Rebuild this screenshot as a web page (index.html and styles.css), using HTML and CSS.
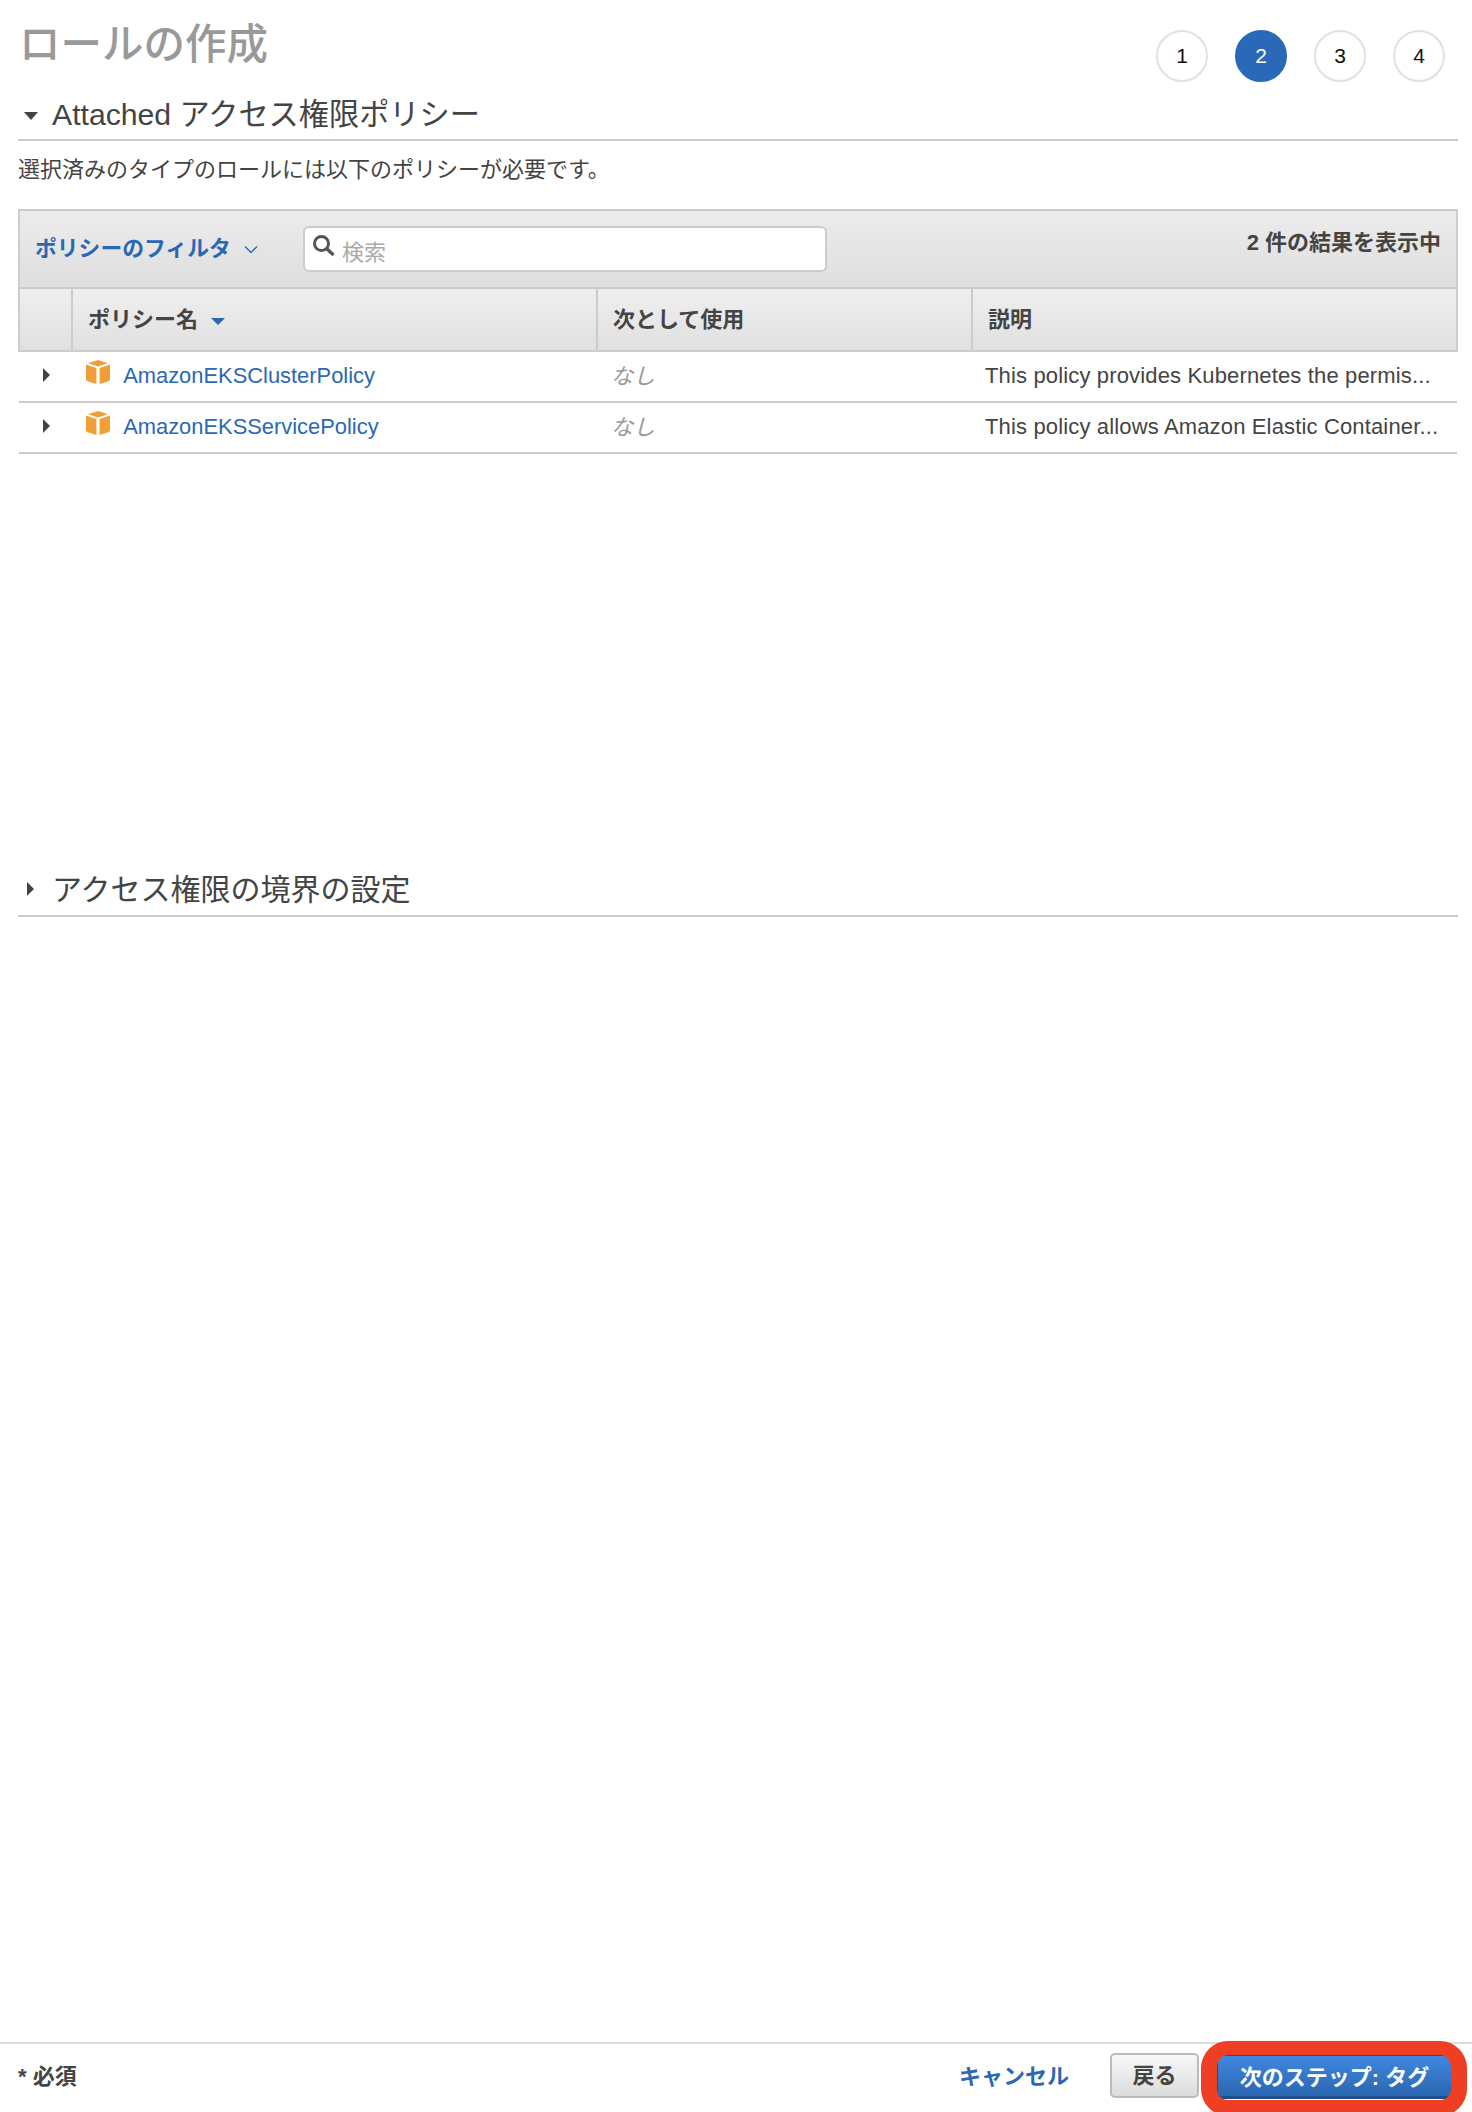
FILE: index.html
```html
<!DOCTYPE html>
<html lang="ja">
<head>
    <meta charset="UTF-8">
    <meta name="viewport" content="width=device-width, initial-scale=1.0">
    <title>ロールの作成</title>
    <link rel="stylesheet" href="styles.css">
</head>
<body>
    <div class="page">
        <div class="top">
            <h1>ロールの作成</h1>
            <div class="steps">
                <span class="step">1</span>
                <span class="step active">2</span>
                <span class="step">3</span>
                <span class="step">4</span>
            </div>
        </div>
        <h2 class="section-title"><span class="tri-down"></span>Attached アクセス権限ポリシー</h2>
        <p class="intro">選択済みのタイプのロールには以下のポリシーが必要です。</p>

        <div class="filter-bar">
            <a class="filter-link" href="#">ポリシーのフィルタ
                <svg class="chevron" width="14" height="9" viewBox="0 0 14 9"><path d="M1 1.5l6 6 6-6" fill="none" stroke="#2a68b4" stroke-width="1.4"/></svg>
            </a>
            <div class="search">
                <svg class="search-icon" width="22" height="21" viewBox="0 0 22 21"><circle cx="8.5" cy="8.5" r="7" fill="none" stroke="#555" stroke-width="3"/><path d="M13.5 13.5l7 6.5" stroke="#555" stroke-width="3.4"/></svg>
                <span class="placeholder">検索</span>
            </div>
            <div class="count">2 件の結果を表示中</div>
        </div>
        <table class="policies">
            <colgroup>
                <col class="col-toggle">
                <col class="col-name">
                <col class="col-used">
                <col>
            </colgroup>
            <thead>
                <tr>
                    <th></th>
                    <th>ポリシー名<span class="sort"></span></th>
                    <th>次として使用</th>
                    <th>説明</th>
                </tr>
            </thead>
            <tbody>
                <tr>
                    <td><span class="tri-right tri-row"></span></td>
                    <td>
                        <svg class="cube" width="24" height="24" viewBox="0 0 24 24"><path d="M12 0l10 3.2L12 6.6 2 3.2z" fill="#f19e38"/><path d="M0 4.4l10.4 3.6V24L1.6 21.2 0 20z" fill="#f19e38"/><path d="M24 4.4L13.6 8V24l8.8-2.8 1.6-1.2z" fill="#f19e38"/></svg>
                        <a class="policy-link" href="#">AmazonEKSClusterPolicy</a>
                    </td>
                    <td class="none">なし</td>
                    <td class="desc">This policy provides Kubernetes the permis...</td>
                </tr>
                <tr>
                    <td><span class="tri-right tri-row"></span></td>
                    <td>
                        <svg class="cube" width="24" height="24" viewBox="0 0 24 24"><path d="M12 0l10 3.2L12 6.6 2 3.2z" fill="#f19e38"/><path d="M0 4.4l10.4 3.6V24L1.6 21.2 0 20z" fill="#f19e38"/><path d="M24 4.4L13.6 8V24l8.8-2.8 1.6-1.2z" fill="#f19e38"/></svg>
                        <a class="policy-link" href="#">AmazonEKSServicePolicy</a>
                    </td>
                    <td class="none">なし</td>
                    <td class="desc">This policy allows Amazon Elastic Container...</td>
                </tr>
            </tbody>
        </table>

        <h2 class="section-title boundary"><span class="tri-right"></span>アクセス権限の境界の設定</h2>
    </div>

    <div class="footer">
        <div class="required">* 必須</div>
        <div class="actions">
            <a class="cancel" href="#">キャンセル</a>
            <button class="btn-back">戻る</button>
            <div class="next-wrap">
                <button class="btn-next">次のステップ: タグ</button>
                <span class="callout"></span>
            </div>
        </div>
    </div>
</body>
</html>
```

FILE: styles.css
```css
* {
    box-sizing: border-box;
}
html, body {
    margin: 0;
    height: 100%;
}
body {
    display: flex;
    flex-direction: column;
    height: 2112px;
    overflow: hidden;
    background: #fff;
    color: #444;
    font-family: "Liberation Sans", "Noto Sans CJK JP", sans-serif;
    font-size: 22px;
}
a {
    text-decoration: none;
    color: #2a68b4;
}
.page {
    flex: 1;
    padding: 0 14px 0 18px;
}
.top {
    display: flex;
    justify-content: space-between;
    height: 91px;
    padding: 30px 13px 0 1px;
}
h1 {
    margin: -9px 0 0;
    font-size: 41.5px;
    line-height: 48px;
    font-weight: 500;
    color: #999;
}
.steps {
    display: flex;
    gap: 27px;
}
.step {
    display: flex;
    align-items: center;
    justify-content: center;
    width: 52px;
    height: 52px;
    border: 2px solid #e1e1e1;
    border-radius: 50%;
    color: #111;
    font-size: 21px;
}
.step.active {
    background: #2a69b8;
    border-color: #2a69b8;
    color: #fff;
}
.section-title {
    display: flex;
    align-items: center;
    margin: 0;
    height: 50px;
    padding-bottom: 6px;
    border-bottom: 2px solid #ccc;
    font-size: 30.2px;
    font-weight: 400;
    color: #444;
}
.tri-down {
    width: 0;
    height: 0;
    margin: 7px 14px 0 6px;
    border-left: 7px solid transparent;
    border-right: 7px solid transparent;
    border-top: 8px solid #444;
}
.tri-right {
    display: inline-block;
    width: 0;
    height: 0;
    margin: 4px 20px 0 8px;
    border-top: 7px solid transparent;
    border-bottom: 7px solid transparent;
    border-left: 7px solid #444;
}
.intro {
    margin: 0;
    height: 68px;
    padding-top: 14px;
    line-height: 30px;
}
.filter-bar {
    display: flex;
    align-items: flex-start;
    height: 78px;
    padding: 15px 15px 0 15px;
    border: 2px solid #ccc;
    border-bottom: 0;
    background: linear-gradient(#ececec, #dedede);
}
.filter-link {
    display: flex;
    align-items: center;
    width: 268px;
    height: 40px;
    font-weight: 700;
    font-size: 21.8px;
}
.chevron {
    margin: 6px 0 0 13px;
}
.search {
    display: flex;
    align-items: center;
    width: 524px;
    height: 46px;
    padding-left: 8px;
    background: #fff;
    border: 2px solid #ccc;
    border-radius: 6px;
}
.placeholder {
    margin: 1px 0 0 7px;
    color: #aaa;
}
.search-icon {
    margin-top: -7px;
}
.count {
    margin: 2px 0 0 auto;
    line-height: 30px;
    font-weight: 700;
    white-space: nowrap;
}
.policies {
    width: 100%;
    table-layout: fixed;
    border-collapse: collapse;
}
.col-toggle {
    width: 53px;
}
.col-name {
    width: 525px;
}
.col-used {
    width: 375px;
}
th {
    height: 63px;
    padding: 0 0 5px 15px;
    text-align: left;
    font-weight: 700;
    background: linear-gradient(#efefef, #e0e0e0);
    border: 2px solid #ccc;
}
td {
    height: 51px;
    padding: 0 0 2px 13px;
    border-bottom: 2px solid #ccc;
    white-space: nowrap;
    overflow: hidden;
}
td:first-child {
    padding: 0 0 2px 24px;
}
td:nth-child(2) {
    padding: 0 0 4px 14px;
}
.sort {
    display: inline-block;
    width: 0;
    height: 0;
    margin: 0 0 2px 13px;
    border-left: 7px solid transparent;
    border-right: 7px solid transparent;
    border-top: 7px solid #2a68b4;
}
.tri-row {
    margin: 5px 0 0;
    vertical-align: top;
}
.cube {
    margin-right: 7px;
    vertical-align: -1px;
}
.policy-link {
    color: #2c68b4;
    font-size: 21.9px;
}
.none {
    font-style: italic;
    color: #999;
    padding: 0 0 6px 14px;
}
.desc {
    letter-spacing: 0.15px;
}
.boundary {
    margin-top: 405px;
    height: 58px;
    padding-bottom: 0;
    font-size: 30px;
}
.boundary .tri-right {
    margin-right: 18px;
    margin-left: 9px;
}
.footer {
    display: flex;
    align-items: center;
    justify-content: space-between;
    height: 70px;
    padding: 0 20px 5px 18px;
    border-top: 2px solid #ddd;
}
.required {
    padding-bottom: 3px;
    font-weight: 700;
}
.actions {
    display: flex;
    align-items: center;
}
.cancel {
    margin-right: 41px;
    padding-bottom: 3px;
    font-weight: 700;
}
.btn-back, .btn-next {
    height: 45px;
    padding: 0 0 3px;
    border-radius: 5px;
    font-family: inherit;
    font-size: 22px;
    font-weight: 700;
}
.btn-back {
    width: 89px;
    margin-right: 18px;
    padding-bottom: 5px;
    border: 2px solid #bbb;
    background: linear-gradient(#f8f8f8, #dcdcdc);
    color: #444;
}
.next-wrap {
    position: relative;
    display: flex;
    margin-top: 3px;
}
.btn-next {
    width: 235px;
    height: 44px;
    border: 1px solid #1c4f8c;
    border-bottom-width: 3px;
    background: linear-gradient(#3f88e0, #2a66b0);
    color: #fff;
}
.callout {
    position: absolute;
    left: -16px;
    top: -14px;
    right: -15px;
    bottom: -17px;
    border: 16px solid #ee3f24;
    border-top-width: 14px;
    border-radius: 27px;
}
```
